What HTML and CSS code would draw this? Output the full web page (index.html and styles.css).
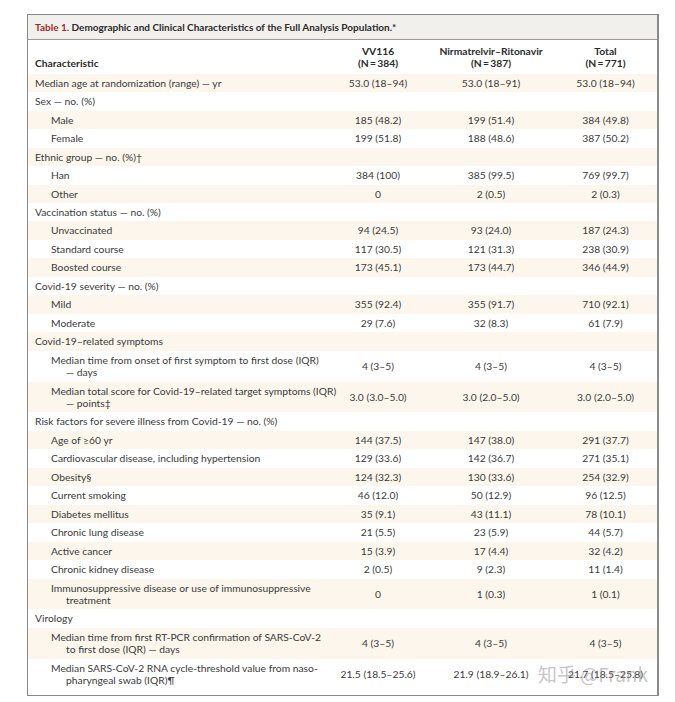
FILE: index.html
```html
<!DOCTYPE html>
<html lang="en">
<head>
<meta charset="utf-8">
<title>Table 1</title>
<link rel="stylesheet" href="styles.css">
</head>
<body>
<div class="page">
  <div class="tbox">
    <div class="title"><span class="tnum">Table 1.</span> Demographic and Clinical Characteristics of the Full Analysis Population.*</div>
    <table class="data">
      <colgroup>
        <col class="c-label"><col class="c-a"><col class="c-b"><col class="c-c">
      </colgroup>
      <thead>
        <tr>
          <th class="lab">Characteristic</th>
          <th>VV116<br>(N&thinsp;=&thinsp;384)</th>
          <th>Nirmatrelvir–Ritonavir<br>(N&thinsp;=&thinsp;387)</th>
          <th>Total<br>(N&thinsp;=&thinsp;771)</th>
        </tr>
      </thead>
      <tbody>
        <tr><td class="lab">Median age at randomization (range) — yr</td><td>53.0 (18–94)</td><td>53.0 (18–91)</td><td>53.0 (18–94)</td></tr>
        <tr><td class="lab">Sex — no. (%)</td><td></td><td></td><td></td></tr>
        <tr><td class="lab sub">Male</td><td>185 (48.2)</td><td>199 (51.4)</td><td>384 (49.8)</td></tr>
        <tr><td class="lab sub">Female</td><td>199 (51.8)</td><td>188 (48.6)</td><td>387 (50.2)</td></tr>
        <tr><td class="lab">Ethnic group — no. (%)†</td><td></td><td></td><td></td></tr>
        <tr><td class="lab sub">Han</td><td>384 (100)</td><td>385 (99.5)</td><td>769 (99.7)</td></tr>
        <tr><td class="lab sub">Other</td><td>0</td><td>2 (0.5)</td><td>2 (0.3)</td></tr>
        <tr><td class="lab">Vaccination status — no. (%)</td><td></td><td></td><td></td></tr>
        <tr><td class="lab sub">Unvaccinated</td><td>94 (24.5)</td><td>93 (24.0)</td><td>187 (24.3)</td></tr>
        <tr><td class="lab sub">Standard course</td><td>117 (30.5)</td><td>121 (31.3)</td><td>238 (30.9)</td></tr>
        <tr><td class="lab sub">Boosted course</td><td>173 (45.1)</td><td>173 (44.7)</td><td>346 (44.9)</td></tr>
        <tr><td class="lab">Covid-19 severity — no. (%)</td><td></td><td></td><td></td></tr>
        <tr><td class="lab sub">Mild</td><td>355 (92.4)</td><td>355 (91.7)</td><td>710 (92.1)</td></tr>
        <tr><td class="lab sub">Moderate</td><td>29 (7.6)</td><td>32 (8.3)</td><td>61 (7.9)</td></tr>
        <tr><td class="lab">Covid-19–related symptoms</td><td></td><td></td><td></td></tr>
        <tr><td class="lab sub2">Median time from onset of first symptom to first dose (IQR)<br>— days</td><td>4 (3–5)</td><td>4 (3–5)</td><td>4 (3–5)</td></tr>
        <tr><td class="lab sub2">Median total score for Covid-19–related target symptoms (IQR)<br>— points‡</td><td>3.0 (3.0–5.0)</td><td>3.0 (2.0–5.0)</td><td>3.0 (2.0–5.0)</td></tr>
        <tr><td class="lab">Risk factors for severe illness from Covid-19 — no. (%)</td><td></td><td></td><td></td></tr>
        <tr><td class="lab sub">Age of ≥60 yr</td><td>144 (37.5)</td><td>147 (38.0)</td><td>291 (37.7)</td></tr>
        <tr><td class="lab sub">Cardiovascular disease, including hypertension</td><td>129 (33.6)</td><td>142 (36.7)</td><td>271 (35.1)</td></tr>
        <tr><td class="lab sub">Obesity§</td><td>124 (32.3)</td><td>130 (33.6)</td><td>254 (32.9)</td></tr>
        <tr><td class="lab sub">Current smoking</td><td>46 (12.0)</td><td>50 (12.9)</td><td>96 (12.5)</td></tr>
        <tr><td class="lab sub">Diabetes mellitus</td><td>35 (9.1)</td><td>43 (11.1)</td><td>78 (10.1)</td></tr>
        <tr><td class="lab sub">Chronic lung disease</td><td>21 (5.5)</td><td>23 (5.9)</td><td>44 (5.7)</td></tr>
        <tr><td class="lab sub">Active cancer</td><td>15 (3.9)</td><td>17 (4.4)</td><td>32 (4.2)</td></tr>
        <tr><td class="lab sub">Chronic kidney disease</td><td>2 (0.5)</td><td>9 (2.3)</td><td>11 (1.4)</td></tr>
        <tr><td class="lab sub2">Immunosuppressive disease or use of immunosuppressive<br>treatment</td><td>0</td><td>1 (0.3)</td><td>1 (0.1)</td></tr>
        <tr><td class="lab">Virology</td><td></td><td></td><td></td></tr>
        <tr><td class="lab sub2">Median time from first RT-PCR confirmation of SARS-CoV-2<br>to first dose (IQR) — days</td><td>4 (3–5)</td><td>4 (3–5)</td><td>4 (3–5)</td></tr>
        <tr><td class="lab sub2">Median SARS-CoV-2 RNA cycle-threshold value from naso-<br>pharyngeal swab (IQR)¶</td><td>21.5 (18.5–25.6)</td><td>21.9 (18.9–26.1)</td><td>21.7 (18.5–25.8)</td></tr>
      </tbody>
    </table>
  </div>
  <p class="foot">* The percentages may not total 100 because of rounding. IQR denotes interquartile range, and RT-PCR reverse-transcriptase–polymerase-chain-reaction.</p>
  <div class="wm">知乎 @Frank</div>
</div>
</body>
</html>
```
FILE: styles.css
```css
html, body {
  margin: 0;
  padding: 0;
  background: #ffffff;
}
body {
  font-family: "Lato", "Open Sans", "Noto Sans CJK SC", sans-serif;
  color: #3a3a3a;
  font-size: 10.3px;
}
.page {
  position: relative;
  width: 675px;
  height: 702px;
  overflow: hidden;
  padding: 14px 0 0 27px;
  box-sizing: border-box;
}
.tbox {
  width: 632px;
  box-sizing: border-box;
  border: 1px solid #8a8a8a;
  border-right-width: 2px;
  padding-bottom: 5px;
}
.title {
  background: #f2f0ec;
  border-bottom: 1px solid #9a9a9a;
  height: 24px;
  line-height: 24px;
  padding-left: 7px;
  font-weight: 700;
  font-size: 10px;
  color: #2b2b2b;
}
.tnum {
  color: #a3282d;
}
.data {
  width: 629px;
  border-collapse: collapse;
  table-layout: fixed;
}
.c-label { width: 300px; }
.c-a { width: 100px; }
.c-b { width: 126px; }
.c-c { width: 103px; }
.data th {
  font-weight: 700;
  text-align: center;
  line-height: 12.4px;
  padding: 5px 0 4px;
  vertical-align: bottom;
  color: #2b2b2b;
}
.data th.lab {
  text-align: left;
  padding-left: 7px;
}
.data td {
  line-height: 12.45px;
  padding: 3px 0;
  text-align: center;
  vertical-align: middle;
  white-space: nowrap;
}
.data td.lab {
  text-align: left;
  padding-left: 7px;
}
.data td.sub {
  padding-left: 23px;
}
.data td.sub2 {
  padding-left: 38px;
  text-indent: -15px;
}
.data tbody tr:nth-child(odd) {
  background: #fcf6ec;
}
.foot {
  margin: 5px 0 0 -7px;
  font-size: 10px;
  color: #888;
  white-space: nowrap;
}
.wm {
  position: absolute;
  left: 538px;
  top: 660px;
  font-family: "Noto Sans CJK SC", "Noto Sans", sans-serif;
  font-size: 19px;
  color: rgba(140, 140, 140, 0.5);
  white-space: nowrap;
}
```
